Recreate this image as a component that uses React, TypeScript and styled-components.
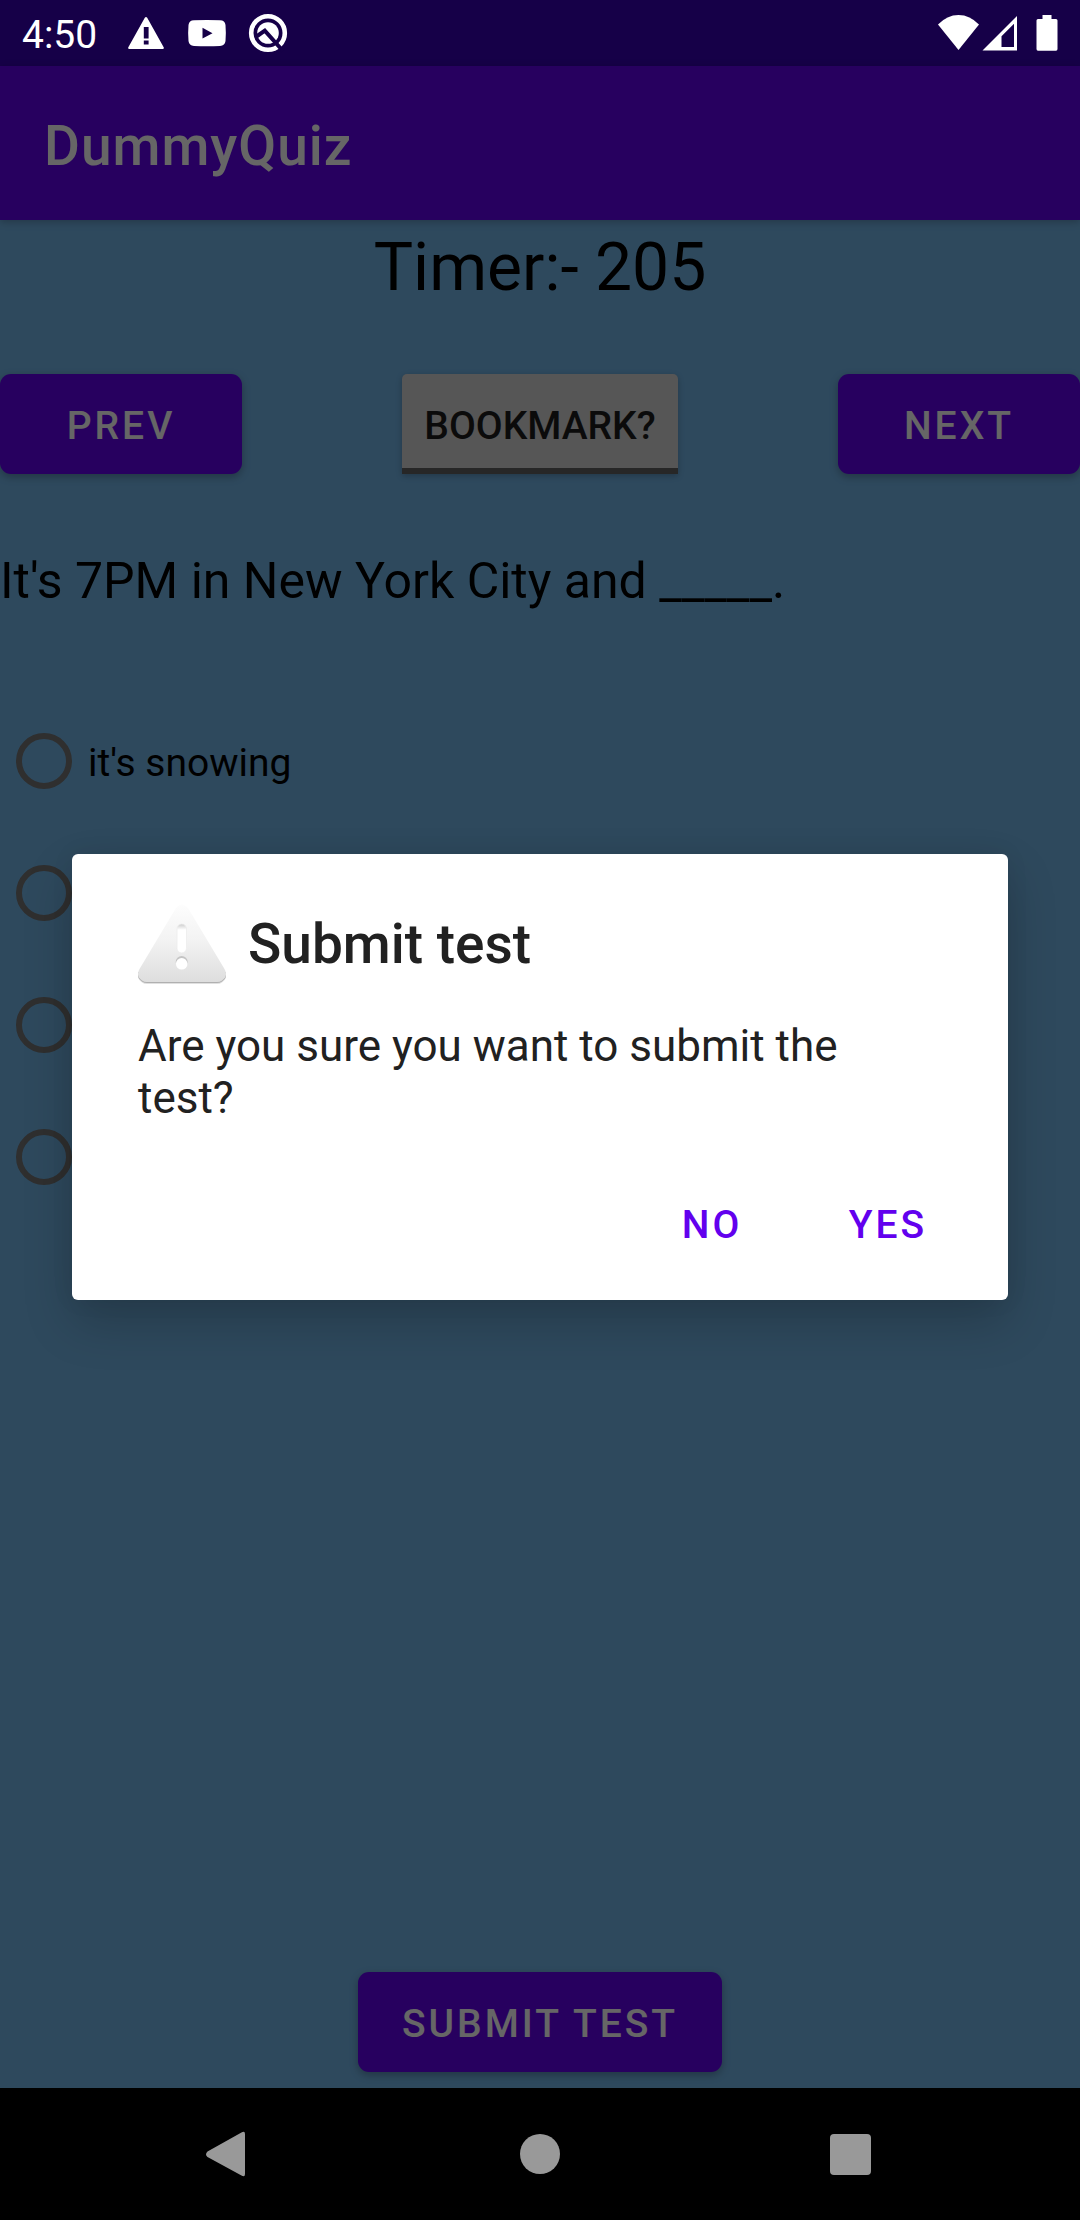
import React from "react";
import styled, { createGlobalStyle } from "styled-components";

const GlobalStyle = createGlobalStyle`
  *, *::before, *::after { box-sizing: border-box; }
  body { margin: 0; background: #000; }
  body, button, input { font-family: Roboto, "Noto Sans", sans-serif; }
  h1, h2, p, fieldset { margin: 0; padding: 0; border: 0; }
  svg { display: block; flex: none; }
`;

const Screen = styled.div`
  display: flex;
  flex-direction: column;
  min-height: 100vh;
`;

const Window = styled.div`
  position: relative;
  flex: 1;
  display: flex;
  flex-direction: column;
  background: #73b6e9;
`;

const StatusBar = styled.div`
  display: flex;
  align-items: center;
  justify-content: space-between;
  height: 66px;
  padding: 0 22px;
  background: #3700b3;
`;

const StatusGroup = styled.div<{ $gap: number }>`
  position: relative;
  z-index: 2;
  display: flex;
  align-items: center;
  gap: ${(p) => p.$gap}px;
  color: #fff;
`;

const Clock = styled.time`
  padding: 4px 8px 0 0;
  font-size: 39px;
  line-height: 46px;
`;

const BatterySlot = styled.span`
  padding-left: 16px;
`;

const AppBar = styled.header`
  display: flex;
  align-items: center;
  height: 154px;
  padding: 6px 44px 0;
  background: #6200ee;
  box-shadow: 0 2px 8px rgba(0, 0, 0, 0.24);
`;

const AppTitle = styled.h1`
  color: #fff;
  font-size: 55px;
  font-weight: 500;
  line-height: 64px;
  letter-spacing: 1px;
`;

const Content = styled.main`
  flex: 1;
  display: flex;
  flex-direction: column;
  color: #000;
`;

const Timer = styled.p`
  padding-top: 6px;
  font-size: 66px;
  line-height: 84px;
  text-align: center;
`;

const Controls = styled.div`
  display: flex;
  justify-content: space-between;
  margin-top: 64px;
`;

const BaseButton = styled.button`
  height: 100px;
  padding: 4px 44px 0;
  border: 0;
  font-size: 39px;
  font-weight: 500;
  line-height: 46px;
  text-transform: uppercase;
  white-space: nowrap;
  cursor: pointer;
`;

const RaisedButton = styled(BaseButton)`
  min-width: 242px;
  border-radius: 11px;
  background: #6200ee;
  color: #fff;
  letter-spacing: 3px;
  box-shadow: 0 3px 8px rgba(0, 0, 0, 0.28);
`;

const ToggleButton = styled(BaseButton)`
  padding: 10px 22px 0;
  border-bottom: 6px solid #616161;
  border-radius: 5px 5px 0 0;
  background: #d6d6d6;
  color: #1c1c1c;
  box-shadow: 0 2px 6px rgba(0, 0, 0, 0.24);
`;

const TextButton = styled(BaseButton)`
  min-width: 176px;
  padding: 0 22px;
  background: transparent;
  color: #6200ee;
  letter-spacing: 3px;
`;

const Question = styled.p`
  margin-top: 78px;
  font-size: 50px;
  line-height: 58px;
`;

const Options = styled.fieldset`
  display: flex;
  flex-direction: column;
  margin-top: 85px;
`;

const Option = styled.label`
  display: flex;
  align-items: center;
  gap: 16px;
  height: 132px;
  padding-left: 16px;
  font-size: 39px;
  line-height: 46px;
`;

const Radio = styled.input`
  appearance: none;
  flex: none;
  width: 56px;
  height: 56px;
  margin: 0;
  border: 6px solid #757575;
  border-radius: 50%;

  &:checked {
    border-color: #03dac5;
    background: radial-gradient(#03dac5 45%, transparent 50%);
  }
`;

const OptionText = styled.span`
  padding-top: 4px;
`;

const SubmitRow = styled.div`
  display: flex;
  justify-content: center;
  margin-top: auto;
  padding: 16px 0;
`;

const Scrim = styled.div`
  position: absolute;
  inset: 0;
  z-index: 1;
  display: grid;
  align-items: center;
  padding: 66px 72px 0;
  background: rgba(0, 0, 0, 0.6);
`;

const Dialog = styled.section`
  padding: 46px 32px 25px 66px;
  border-radius: 6px;
  background: #fff;
  color: #212121;
  box-shadow: 0 22px 50px rgba(0, 0, 0, 0.2), 0 0 24px rgba(0, 0, 0, 0.06);
`;

const DialogHeader = styled.div`
  display: flex;
  align-items: center;
  gap: 22px;
`;

const DialogTitle = styled.h2`
  font-size: 55px;
  font-weight: 500;
  line-height: 64px;
`;

const DialogMessage = styled.p`
  margin: 32px 34px 51px 0;
  font-size: 44px;
  line-height: 52px;
`;

const DialogActions = styled.div`
  display: flex;
  justify-content: flex-end;
`;

const NavBar = styled.nav`
  display: flex;
  justify-content: center;
  gap: 90px;
  height: 132px;
  background: #000;
`;

const NavButton = styled.button`
  display: grid;
  place-items: center;
  width: 220px;
  padding: 0;
  border: 0;
  background: transparent;
  color: #999;
`;

const WarningIcon = () => (
  <svg width="40" height="40" viewBox="0 0 40 40" fill="currentColor" aria-hidden="true">
    <path
      fillRule="evenodd"
      d="M21.200 4.800 37.800 34.600Q38.400 36 36.800 36H3.200Q1.600 36 2.200 34.600L18.800 4.800Q20 3 21.200 4.800ZM17.800 14V25.500H22.600V14ZM17.800 27.500V31.600H22.600V27.500Z"
    />
  </svg>
);

const VideoIcon = () => (
  <svg width="40" height="40" viewBox="0 0 40 40" fill="currentColor" aria-hidden="true">
    <path
      fillRule="evenodd"
      d="M7 7.300Q20 6.500 33 7.300Q38 7.500 38.500 12Q39.200 20 38.500 28Q38 32.700 33 32.900Q20 33.700 7 32.900Q2 32.700 1.500 28Q.8 20 1.500 12Q2 7.500 7 7.300ZM15.500 14.800V25.600L25.500 20.200Z"
    />
  </svg>
);

const SystemIcon = () => (
  <svg width="40" height="40" viewBox="0 0 40 40" fill="none" aria-hidden="true">
    <circle cx="20" cy="20" r="16.800" stroke="#fff" strokeWidth="4.600" />
    <circle cx="20" cy="20" r="10.800" fill="#fff" />
    <path d="M8.500 23.500 16.800 17.600 35 38" stroke="#160048" strokeWidth="4" />
  </svg>
);

const WifiIcon = () => (
  <svg width="42" height="36" viewBox="0 0 42 36" fill="currentColor" aria-hidden="true">
    <path d="M20.500 35 0 9.600Q9 0 20.500 0T41 9.600Z" />
  </svg>
);

const SignalIcon = () => (
  <svg width="36" height="36" viewBox="0 0 36 36" fill="currentColor" aria-hidden="true">
    <path fillRule="evenodd" d="M.5 35.500H35V1ZM19.500 32V21.300L32 8.800V32Z" />
  </svg>
);

const BatteryIcon = () => (
  <svg width="22" height="36" viewBox="0 0 22 36" fill="currentColor" aria-hidden="true">
    <path d="M6.500 0H15.500V4H20Q21.500 4 21.500 5.500V34Q21.500 35.700 20 35.700H2Q.5 35.700 .5 34V5.500Q.5 4 2 4H6.500Z" />
  </svg>
);

const trianglePath =
  "M38 8Q44 1 50 8L86.500 69Q90.500 76 84 80.500Q82 82 79 82H9Q6 82 4 80.500Q-2.500 76 1.500 69Z";

const AlertIcon = () => (
  <svg width="88" height="88" viewBox="0 0 88 88" aria-hidden="true">
    <defs>
      <linearGradient id="alertFill" x1="0" y1="0" x2="0" y2="1">
        <stop offset="0" stopColor="#fdfdfd" />
        <stop offset="0.450" stopColor="#f3f3f3" />
        <stop offset="1" stopColor="#dedede" />
      </linearGradient>
      <linearGradient id="alertMark" x1="0" y1="0" x2="0" y2="1">
        <stop offset="0" stopColor="#cccccc" />
        <stop offset="0.200" stopColor="#ffffff" />
      </linearGradient>
      <clipPath id="alertLip">
        <rect x="0" y="72" width="88" height="16" />
      </clipPath>
    </defs>
    <g clipPath="url(#alertLip)">
      <path d={trianglePath} fill="#e0e0e0" transform="translate(0 2)" />
      <path d={trianglePath} fill="#b0b0b0" transform="translate(0 1)" />
    </g>
    <path d={trianglePath} fill="url(#alertFill)" />
    <rect x="39" y="24" width="9.500" height="29" rx="4.700" fill="url(#alertMark)" stroke="#ececec" strokeWidth="0.800" />
    <circle cx="43.700" cy="62" r="6" fill="#c4c4c4" />
    <circle cx="43.700" cy="63.800" r="5.800" fill="#fff" />
  </svg>
);

const BackIcon = () => (
  <svg width="60" height="60" viewBox="0 0 60 60" fill="currentColor" aria-hidden="true">
    <path d="M41 8.800Q45 6 45 10V50Q45 54 41 51.200L7.500 33Q4.500 30.500 7.500 27.500Z" />
  </svg>
);

const HomeIcon = () => (
  <svg width="60" height="60" viewBox="0 0 60 60" fill="currentColor" aria-hidden="true">
    <circle cx="30" cy="30" r="20" />
  </svg>
);

const RecentsIcon = () => (
  <svg width="60" height="60" viewBox="0 0 60 60" fill="currentColor" aria-hidden="true">
    <rect x="10" y="10" width="41" height="41" rx="4" />
  </svg>
);

const options = [
  { id: "a", text: "it's snowing" },
  { id: "b" },
  { id: "c" },
  { id: "d" },
];

export default function App() {
  return (
    <Screen>
      <GlobalStyle />
      <Window>
        <StatusBar>
          <StatusGroup $gap={21}>
            <Clock>4:50</Clock>
            <WarningIcon />
            <VideoIcon />
            <SystemIcon />
          </StatusGroup>
          <StatusGroup $gap={2}>
            <WifiIcon />
            <SignalIcon />
            <BatterySlot>
              <BatteryIcon />
            </BatterySlot>
          </StatusGroup>
        </StatusBar>
        <AppBar>
          <AppTitle>DummyQuiz</AppTitle>
        </AppBar>
        <Content>
          <Timer>Timer:- 205</Timer>
          <Controls>
            <RaisedButton type="button">Prev</RaisedButton>
            <ToggleButton type="button" aria-pressed="false">
              Bookmark?
            </ToggleButton>
            <RaisedButton type="button">Next</RaisedButton>
          </Controls>
          <Question>It's 7PM in New York City and _____.</Question>
          <Options>
            {options.map((option, index) => (
              <Option key={option.id}>
                <Radio
                  type="radio"
                  name="answer"
                  value={option.id}
                  aria-label={option.text ?? `Option ${index + 1}`}
                />
                {option.text && <OptionText>{option.text}</OptionText>}
              </Option>
            ))}
          </Options>
          <SubmitRow>
            <RaisedButton type="button">Submit test</RaisedButton>
          </SubmitRow>
        </Content>
        <Scrim>
          <Dialog role="alertdialog" aria-modal="true" aria-labelledby="dialog-title" aria-describedby="dialog-message">
            <DialogHeader>
              <AlertIcon />
              <DialogTitle id="dialog-title">Submit test</DialogTitle>
            </DialogHeader>
            <DialogMessage id="dialog-message">Are you sure you want to submit the test?</DialogMessage>
            <DialogActions>
              <TextButton type="button">No</TextButton>
              <TextButton type="button">Yes</TextButton>
            </DialogActions>
          </Dialog>
        </Scrim>
      </Window>
      <NavBar>
        <NavButton type="button" aria-label="Back">
          <BackIcon />
        </NavButton>
        <NavButton type="button" aria-label="Home">
          <HomeIcon />
        </NavButton>
        <NavButton type="button" aria-label="Recent apps">
          <RecentsIcon />
        </NavButton>
      </NavBar>
    </Screen>
  );
}
